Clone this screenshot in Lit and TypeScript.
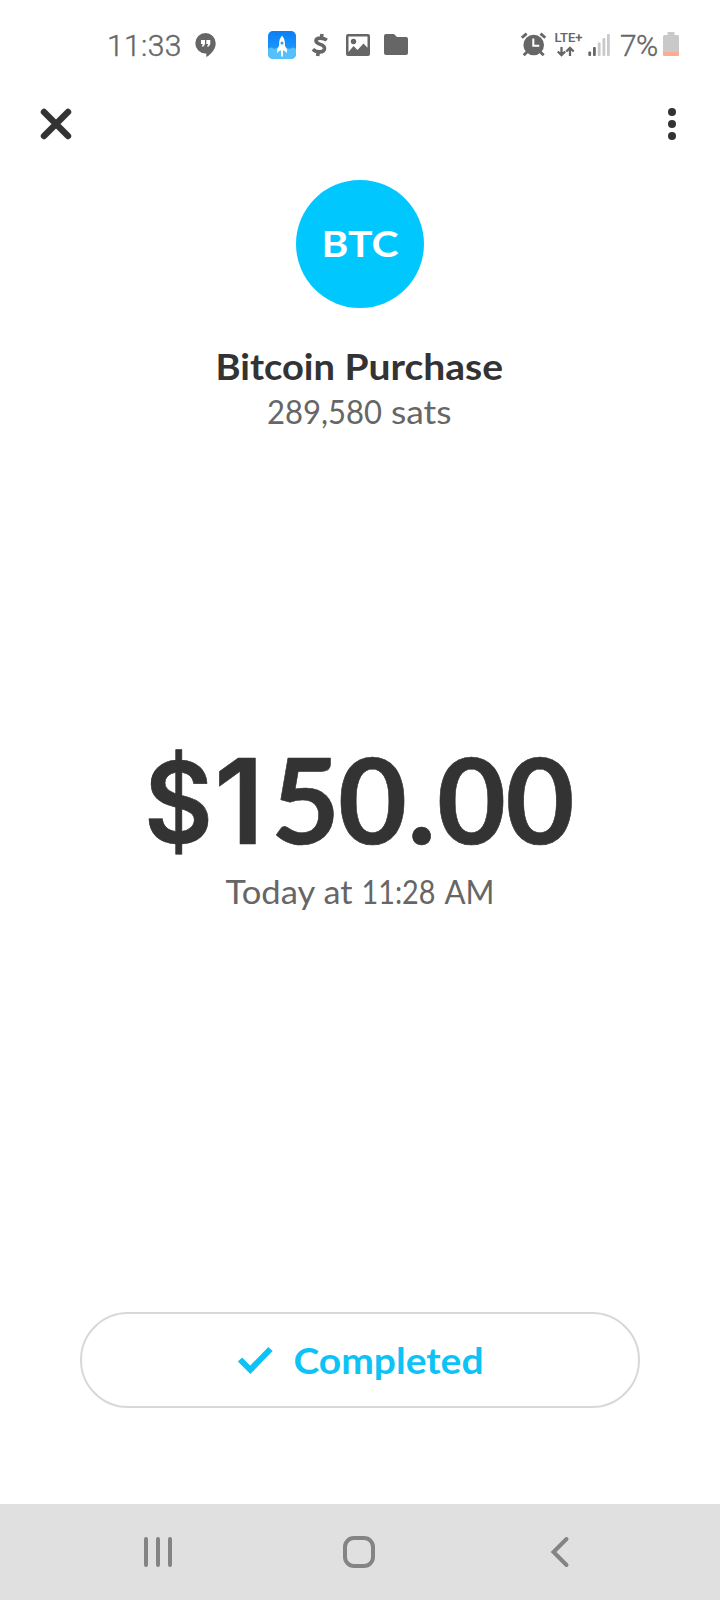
import { LitElement, html, css } from "lit";
import { customElement } from "lit/decorators.js";

@customElement("status-bar")
class StatusBar extends LitElement {
  static styles = css`
    :host { display: flex; height: 90px; padding: 0 41px 0 107px; box-sizing: border-box; justify-content: space-between; font: 400 30px/92px Roboto, sans-serif; color: #666; }
    .side { display: flex; align-items: flex-start; }
    svg { display: block; margin-top: 28px; flex: none; }
    .time { width: 85px; font-weight: 300; letter-spacing: 0.4px; -webkit-text-stroke: 0.4px #666; }
    .pct { margin-left: 8px; width: 43px; font-weight: 300; font-size: 30px; letter-spacing: -0.6px; -webkit-text-stroke: 0.4px #666; }
    .apps { margin-left: 48px; }
    .lte { font: 500 12.5px Roboto, sans-serif; }
  `;
  render() {
    return html`
      <div class="side">
        <span class="time">11:33</span>
        <svg width="28" height="32" viewBox="192 28 28 32">
          <path fill="#666" d="M205.500 33a10.200 10.200 0 0 1 10.200 10.200c0 6-4.500 11-9.400 13.800v-3.600h-.8a10.200 10.200 0 0 1 0-20.400z"/>
          <path fill="#fff" d="M201 40h4v4l-1.500 2.500h-1.800l1.200-2.500H201zM206.300 40h4v4l-1.500 2.500H207l1.200-2.500h-1.900z"/>
        </svg>
        <svg class="apps" width="144" height="32" viewBox="268 28 144 32">
          <defs>
            <linearGradient id="sky" x1="0" y1="0" x2="0" y2="1"><stop offset="0" stop-color="#0c7df5"/><stop offset="1" stop-color="#22a8fb"/></linearGradient>
            <clipPath id="tile"><rect x="268" y="31" width="28" height="28" rx="5"/></clipPath>
          </defs>
          <g clip-path="url(#tile)">
            <rect x="268" y="31" width="28" height="28" fill="url(#sky)"/>
            <path fill="#55c0fc" d="M268 49q3-3 6 0 3-2 5 1h6q2-3 5-1 3-3 6 0v10h-28z"/>
            <path fill="#fff" d="M282 35.500q3 3.500 3 7.500v3l2 3v4l-3-2.500h-1v6h-2v-6h-1l-3 2.500V49l2-3v-3q0-4 3-7.500z"/>
            <circle cx="282" cy="43" r="1.500" fill="#329cec"/>
          </g>
          <path fill="none" stroke="#666" stroke-width="3.600" d="M326.800 40.200q-2.600-2.100-6.200-2.100-4.600 0-4.600 2.700 0 2.200 4.300 3.600 4.500 1.500 4.200 4.300-.5 3.200-4.700 3.200-4.100 0-6.900-2.700M321.300 38l.8-4M318.400 52l-.8 4"/>
          <path fill="#666" fill-rule="evenodd" d="M348 34h20q2 0 2 2v18q0 2-2 2h-20q-2 0-2-2V36q0-2 2-2zm.5 2.500V52l5-6 4 4 6-6.500 4 4.300V36.500z"/>
          <circle cx="353.500" cy="41.500" r="2.700" fill="#666"/>
          <path fill="#666" d="M386 34h8l3 3h9q2 0 2 2v14q0 2-2 2h-20q-2 0-2-2V36q0-2 2-2z"/>
        </svg>
      </div>
      <div class="side">
        <svg width="94" height="32" viewBox="518 28 94 32">
          <g fill="none" stroke="#666">
            <path stroke-width="2.800" d="M521.800 37.800l4.800-4.200M545.300 37.800l-4.800-4.200M527 52l-3.300 3.300M540.400 52l3.300 3.300"/>
          </g>
          <circle cx="533.700" cy="45" r="10.300" fill="#666"/>
          <path fill="none" stroke="#fff" stroke-width="2" d="M533.300 38.500v7.300h6"/>
          <text class="lte" x="554.500" y="42.300" fill="#666" stroke="#666" stroke-width=".1" textLength="28" lengthAdjust="spacingAndGlyphs">LTE+</text>
          <g fill="none" stroke="#666" stroke-width="2.300"><path d="M561.500 47v8M557.800 51.500l3.700 3.700 3.700-3.700M570 56v-8M566.300 51.500l3.700-3.700 3.700 3.700"/></g>
          <g fill="#666"><rect x="588.300" y="51.500" width="2.800" height="4.500" rx="1"/><rect x="593" y="47" width="2.800" height="9" rx="1"/></g>
          <g fill="#c9c9c9"><rect x="597.800" y="42.500" width="2.800" height="13.500" rx="1"/><rect x="602.500" y="38" width="2.800" height="18" rx="1"/><rect x="607" y="34" width="2.800" height="22" rx="1"/></g>
        </svg>
        <span class="pct">7%</span>
        <svg width="16" height="32" viewBox="663 28 16 32">
          <path fill="#c9c9c9" d="M667.500 32h7v3h3q1.500 0 1.500 2v15h-16V37q0-2 1.500-2h3z"/>
          <path fill="#ffab91" d="M663 52h16v3q0 1-1 1h-14q-1 0-1-1z"/>
        </svg>
      </div>`;
  }
}

@customElement("nav-keys")
class NavKeys extends LitElement {
  static styles = css`
    :host { display: flex; align-items: center; height: 96px; padding-left: 142px; box-sizing: border-box; background: #e0e0e0; }
    svg { display: block; fill: none; stroke: #848484; stroke-width: 4; stroke-linecap: round; }
    .home { margin: 0 175px 0 169px; }
  `;
  render() {
    return html`
      <svg width="32" height="32"><path d="M4 3v26M16 3v26M28 3v26"/></svg>
      <svg class="home" width="32" height="32"><rect x="2" y="2" width="28" height="28" rx="9"/></svg>
      <svg width="20" height="32"><path d="M16.500 3L3.500 16l13 13"/></svg>`;
  }
}

@customElement("app-root")
class AppRoot extends LitElement {
  static styles = css`
    :host { display: flex; flex-direction: column; height: 1600px; background: #fff; font-family: Lato, sans-serif; color: #333; overflow: hidden; }
    svg { display: block; overflow: visible; }
    .actions { display: flex; justify-content: space-between; padding: 18px 44px 0 40px; height: 90px; box-sizing: border-box; }
    .head { display: flex; flex-direction: column; align-items: center; }
    .avatar { width: 128px; height: 128px; border-radius: 50%; background: #00c8ff; }
    .btc { font: 700 36px Lato, sans-serif; }
    .title { font: 700 36px Lato, sans-serif; }
    .sub { font: 400 32px Lato, sans-serif; }
    .lines { margin-top: 32px; }
    .amount { margin-top: 270px; }
    .sum { font: 700 119px Lato, sans-serif; }
    .dollar { font: 600 113px Inter, sans-serif; }
    .one { font: 620 118px Inter, sans-serif; }
    .status { margin: 382px 80px 96px; height: 96px; box-sizing: border-box; border: 2px solid #d8d8d8; border-radius: 48px; }
  `;
  render() {
    return html`
      <status-bar></status-bar>
      <div class="actions">
        <svg width="32" height="32"><path stroke="#333" stroke-width="6.400" stroke-linecap="round" d="M4 4l24 24M28 4L4 28"/></svg>
        <svg width="8" height="32" fill="#333"><circle cx="4" cy="4" r="4"/><circle cx="4" cy="16" r="4"/><circle cx="4" cy="28" r="4"/></svg>
      </div>
      <div class="head">
        <div class="avatar"><svg width="128" height="128"><text class="btc" x="25.500" y="77" textLength="77" lengthAdjust="spacingAndGlyphs" fill="#fff">BTC</text></svg></div>
        <svg class="lines" width="720" height="110" viewBox="0 340 720 110">
          <text class="title" y="380" fill="#333"><tspan x="215.500" textLength="119.500" lengthAdjust="spacingAndGlyphs">Bitcoin</tspan> <tspan x="344.500" textLength="158.500" lengthAdjust="spacingAndGlyphs">Purchase</tspan></text>
          <text class="sub" y="424" fill="#666"><tspan x="267" textLength="115" lengthAdjust="spacingAndGlyphs">289,580</tspan> <tspan x="391" textLength="60.500" lengthAdjust="spacingAndGlyphs">sats</tspan></text>
        </svg>
        <svg class="amount" width="720" height="210" viewBox="0 720 720 210">
          <text class="sum" y="844" fill="#333" stroke="#333" stroke-width=".6" stroke-linejoin="round"><tspan class="dollar" x="144" y="842.500" textLength="69" lengthAdjust="spacingAndGlyphs">$</tspan><tspan class="one" x="214" y="844">1</tspan><tspan x="271 338 407.500 437 505.500">50.00</tspan></text>
          <text class="sub" y="904" fill="#666"><tspan x="225.500" textLength="89" lengthAdjust="spacingAndGlyphs">Today</tspan> <tspan x="323.500" textLength="29" lengthAdjust="spacingAndGlyphs">at</tspan> <tspan x="361.500" textLength="74" lengthAdjust="spacingAndGlyphs">11:28</tspan> <tspan x="444.500" textLength="50" lengthAdjust="spacingAndGlyphs">AM</tspan></text>
        </svg>
      </div>
      <div class="status">
        <svg width="556" height="92" viewBox="82 1314 556 92">
          <path fill="none" stroke="#0dc3f6" stroke-width="6" d="M240 1359.500l10.300 10.300L270.500 1349"/>
          <text class="title" x="293.500" y="1374" textLength="190" lengthAdjust="spacingAndGlyphs" fill="#0dc3f6">Completed</text>
        </svg>
      </div>
      <nav-keys></nav-keys>`;
  }
}
